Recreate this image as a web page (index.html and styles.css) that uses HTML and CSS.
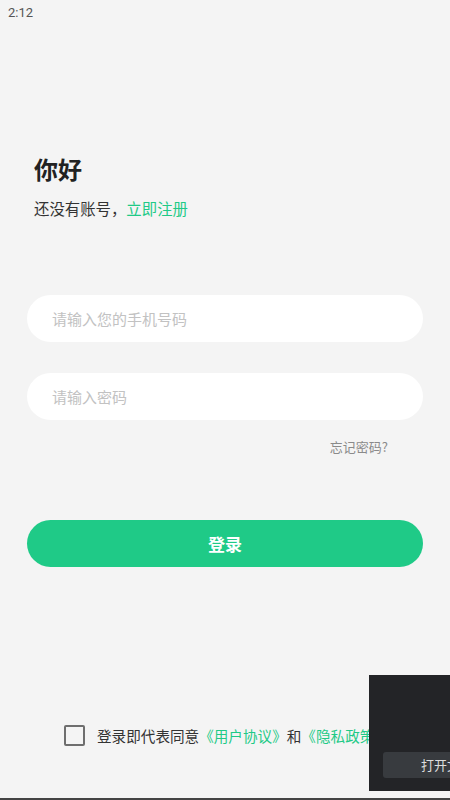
FILE: index.html
```html
<!DOCTYPE html>
<html lang="zh-CN">
<head>
    <meta charset="UTF-8">
    <title>登录</title>
    <link rel="stylesheet" href="styles.css">
</head>
<body>
    <div class="status-bar">2:12</div>
    <div class="page">
        <h1 class="hello">你好</h1>
        <p class="sub">还没有账号，<a class="green">立即注册</a></p>

        <div class="field">请输入您的手机号码</div>
        <div class="field second">请输入密码</div>
        <div class="forgot-row"><span class="forgot">忘记密码?</span></div>

        <button class="login-btn">登录</button>
    </div>

    <div class="agree">
        <span class="check"></span>
        <span>登录即代表同意<a class="green">《用户协议》</a>和<a class="green">《隐私政策》</a></span>
    </div>

    <div class="toast">
        <div class="toast-btn">打开文件</div>
    </div>
    <div class="bottom-line"></div>
</body>
</html>
```

FILE: styles.css
```css
body {
    margin: 0;
    width: 450px;
    height: 800px;
    background-color: #f4f4f4;
    font-family: "Noto Sans CJK SC", "Noto Sans", sans-serif;
    color: #333;
    position: relative;
    overflow: hidden;
}
.status-bar {
    height: 26px;
    padding-left: 8px;
    font-family: Roboto, sans-serif;
    font-size: 13px;
    line-height: 26px;
    color: #555;
}
.page {
    padding: 0 27px;
}
.hello {
    margin: 126px 0 0 7px;
    font-size: 24px;
    line-height: 34px;
    font-weight: bold;
    color: #222;
}
.sub {
    margin: 11px 0 0 7px;
    font-size: 15.4px;
    line-height: 22px;
    color: #333;
}
.green {
    color: #1fca87;
}
.field {
    margin-top: 76px;
    height: 47px;
    border-radius: 24px;
    background: #fff;
    padding-left: 25px;
    font-size: 15px;
    line-height: 47px;
    color: #c2c2c2;
}
.field.second {
    margin-top: 31px;
}
.forgot-row {
    display: flex;
    justify-content: flex-end;
    padding-right: 35px;
    margin-top: 18px;
}
.forgot {
    font-size: 13px;
    line-height: 18px;
    color: #8a8a8a;
}
.login-btn {
    display: block;
    width: 100%;
    height: 47px;
    margin-top: 64px;
    border: none;
    border-radius: 24px;
    background-color: #1fca87;
    color: #fff;
    font-family: inherit;
    font-size: 17px;
    font-weight: bold;
}
.agree {
    position: absolute;
    left: 64px;
    top: 725px;
    display: flex;
    align-items: center;
    gap: 12px;
    font-size: 14.6px;
    color: #333;
    white-space: nowrap;
}
.check {
    width: 17px;
    height: 17px;
    border: 2px solid #6e6e6e;
    border-radius: 2px;
}
.toast {
    position: absolute;
    left: 369px;
    top: 675px;
    width: 81px;
    height: 116px;
    background: #232427;
    overflow: hidden;
}
.toast-btn {
    margin: 77px 0 0 14px;
    width: 110px;
    height: 26px;
    background: #383b3f;
    border-radius: 3px;
    color: #ddd;
    font-size: 13px;
    line-height: 26px;
    padding-left: 38px;
    white-space: nowrap;
}
.bottom-line {
    position: absolute;
    left: 0;
    bottom: 0;
    width: 450px;
    height: 2px;
    background: #444;
}
```
